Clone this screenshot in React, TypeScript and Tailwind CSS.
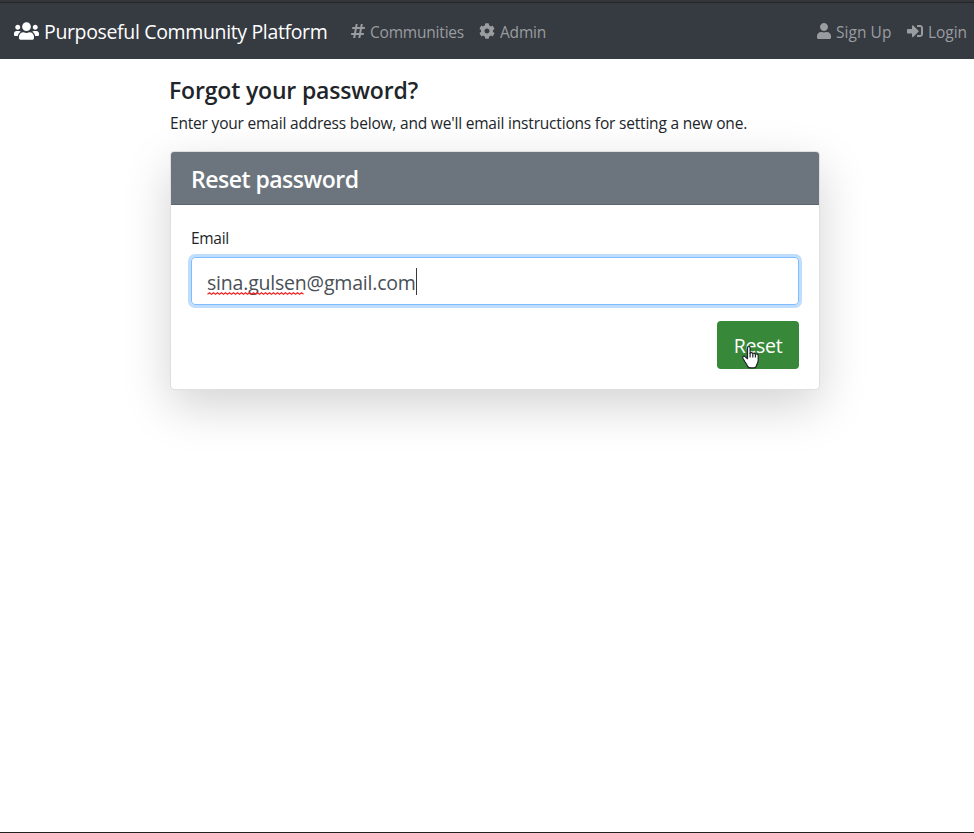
import type { ReactNode } from "react";
import { FaUsers, FaHashtag, FaCog, FaUser, FaSignInAlt } from "react-icons/fa";

function NavLink({ icon, children, className }: { icon: ReactNode; children: ReactNode; className: string }) {
  return (
    <a className="flex h-6 items-center gap-[5px] whitespace-nowrap text-[15.5px] leading-6 text-[#9a9da0]">
      {icon}
      <span className={className}>{children}</span>
    </a>
  );
}

function Squiggle() {
  const points = Array.from({ length: 49 }, (_, i) => `${i * 2 + 0.5},${i % 2 ? 0.7 : 2.3}`).join(" ");
  return (
    <svg className="absolute left-0 top-[21px] h-[3px] w-[97px]" viewBox="0 0 97 3">
      <polyline points={points} fill="none" stroke="#ee2222" strokeWidth="1.1" />
    </svg>
  );
}

function HandCursor() {
  return (
    <svg className="absolute left-[25px] top-[24px] h-[24px] w-[18px]" viewBox="0 0 18 24">
      <path
        d="M5.500 2.800c0-1.900 2.600-1.900 2.600 0v5.400c.4-.9 2.500-.8 2.700.5.500-.8 2.400-.5 2.600.6.6-.6 2.800-.3 2.800 1.300v4.600c0 2.500-1.400 3.600-1.800 5.600-.4 2.700-8.200 2.900-9 .2-.5-1.700-1.500-2.700-2.500-4.300l-2-3.500c-.9-1.800 1.200-2.700 2.400-1.500l2.200 2z"
        fill="#fff"
        stroke="#20242c"
        strokeWidth="1.2"
        strokeLinejoin="round"
      />
      <path d="M8.100 8v4.500M10.800 9v3.500M13.400 9.800v2.700" stroke="#20242c" strokeWidth="1.2" fill="none" />
    </svg>
  );
}

export default function App() {
  return (
    <div className="flex h-[833px] w-[974px] flex-col overflow-hidden border-b border-[#202020] bg-white font-['Open_Sans','Noto_Sans',sans-serif] text-[#212529]">
      <div className="h-[3px] shrink-0 border-b border-[#262626] bg-[#35363a]" />
      <nav className="flex h-14 shrink-0 items-center bg-[#363a41] pl-[14px] pr-[7px]">
        <a className="flex items-center gap-[5px] whitespace-nowrap text-[19.5px] leading-[30px] tracking-[-0.35px] text-white">
          <FaUsers className="h-5 w-[25px]" />
          <span className="w-[284px] pt-px">Purposeful Community Platform</span>
        </a>
        <div className="ml-[23px] flex gap-4">
          <NavLink icon={<FaHashtag className="h-4 w-[14px]" />} className="w-[93px] pt-px tracking-[-0.2px]">Communities</NavLink>
          <NavLink icon={<FaCog className="h-4 w-4" />} className="w-[46px] pt-px tracking-[-0.2px]">Admin</NavLink>
        </div>
        <div className="ml-auto flex gap-4">
          <NavLink icon={<FaUser className="h-4 w-[14px]" />} className="w-[55px] pt-px tracking-[0.05px]">Sign Up</NavLink>
          <NavLink icon={<FaSignInAlt className="h-4 w-4" />} className="w-[39px] pt-px tracking-[-0.05px]">Login</NavLink>
        </div>
      </nav>
      <main className="ml-[170px] w-[650px] pt-4">
        <h1 className="-ml-px whitespace-nowrap text-[23px] font-semibold leading-[30px] tracking-[-0.17px]">Forgot your password?</h1>
        <p className="mt-[6px] whitespace-nowrap text-[15.5px] leading-6 tracking-[-0.19px]">
          Enter your email address below, and we'll email instructions for setting a new one.
        </p>
        <section className="mt-4 h-[239px] rounded border border-[#dfdfdf] bg-white shadow-[0_16px_48px_rgba(0,0,0,0.175)]">
          <h2 className="h-[53px] rounded-t-[3px] border-b border-[#5f676e] bg-[#6c757d] pl-5 text-[23px] font-semibold leading-[54px] tracking-[-0.5px] text-white">
            Reset password
          </h2>
          <div className="px-5 pt-5">
            <label className="block pt-px text-[15.5px] leading-6 tracking-[-0.3px]">Email</label>
            <div className="mt-[7px] flex h-12 items-center rounded border border-[#80bdff] px-[15px] text-[19.5px] leading-6 tracking-[-0.2px] text-[#495057] shadow-[0_0_0_3px_rgba(0,123,255,0.25)]">
              <span className="pt-[3px]">
                <span className="relative inline-block">
                  sina.gulsen
                  <Squiggle />
                </span>
                @gmail.com
              </span>
              <span className="h-[27px] w-px bg-[#343a40]" />
            </div>
            <div className="relative ml-auto mt-4 h-12 w-[82px] rounded bg-[#378838] text-center text-[19.5px] leading-[50px] tracking-[-0.3px] text-white">
              Reset
              <HandCursor />
            </div>
          </div>
        </section>
      </main>
    </div>
  );
}
